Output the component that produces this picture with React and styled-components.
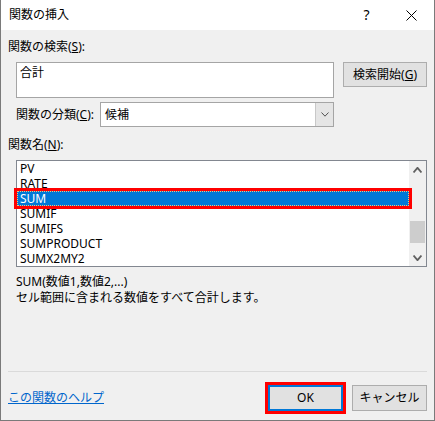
import React from "react";
import styled, { createGlobalStyle } from "styled-components";

// --- ESTILOS ---
const GlobalStyle = createGlobalStyle`
  html, body {
    margin: 0;
    padding: 0;
    background: #f0f0f0;
  }
`;

const Window = styled.div`
  width: 435px;
  height: 421px;
  box-sizing: border-box;
  border: 1px solid #7a7a7a;
  border-top: none;
  background: #f0f0f0;
  display: flex;
  flex-direction: column;
  font-family: "Noto Sans", "Noto Sans CJK JP", sans-serif;
  font-size: 12px;
  line-height: 16px;
  color: #000;
`;

const TitleBar = styled.div`
  height: 30px;
  background: #fff;
  display: flex;
  align-items: center;
  padding-left: 8px;
`;

const Title = styled.div`
  flex: 1;
`;

const TitleButton = styled.div`
  width: 45px;
  height: 30px;
  display: flex;
  align-items: center;
  justify-content: center;
  font-size: 14px;
`;

const Body = styled.div`
  flex: 1;
  display: flex;
  flex-direction: column;
  padding: 9px 7px 9px;
`;

const Label = styled.div`
  margin-top: ${(p) => p.$mt || 0}px;
  height: 16px;
`;

const Row = styled.div`
  display: flex;
  align-items: ${(p) => p.$align || "center"};
  margin-top: ${(p) => p.$mt || 0}px;
  margin-left: 8px;
`;

const SearchBox = styled.div`
  width: 318px;
  height: 36px;
  box-sizing: border-box;
  border: 1px solid #a5a5a5;
  background: #fff;
  padding: 2px 3px;
`;

const Button = styled.div`
  width: ${(p) => p.$w || 75}px;
  height: ${(p) => p.$h || 26}px;
  box-sizing: border-box;
  border: ${(p) => (p.$default ? "2px solid #0078d7" : "1px solid #adadad")};
  background: #e1e1e1;
  display: flex;
  align-items: center;
  justify-content: center;
  margin-left: ${(p) => p.$ml || 0}px;
  ${(p) => p.$marked && "outline: 3px solid #ff0000;"}
`;

const CategoryLabel = styled.div`
  width: 84px;
`;

const Select = styled.div`
  width: 234px;
  height: 25px;
  box-sizing: border-box;
  border: 1px solid #a5a5a5;
  background: #fff;
  display: flex;
`;

const SelectValue = styled.div`
  flex: 1;
  padding-left: 4px;
  display: flex;
  align-items: center;
`;

const DropButton = styled.div`
  width: 17px;
  background: #e5e5e5;
  border-left: 1px solid #c8c8c8;
  display: flex;
  align-items: center;
  justify-content: center;
`;

const ListBox = styled.div`
  margin-top: 7px;
  margin-left: 8px;
  width: 411px;
  height: 107px;
  box-sizing: border-box;
  border: 1px solid #828790;
  background: #fff;
  display: flex;
`;

const Items = styled.div`
  flex: 1;
  display: flex;
  flex-direction: column;
`;

const Item = styled.div`
  position: relative;
  height: 15px;
  line-height: 15px;
  padding-left: 3px;
  ${(p) =>
    p.$selected &&
    `
    background: #0078d7;
    color: #fff;
    outline: 3px solid #ff0000;
    z-index: 1;
    &::after {
      content: "";
      position: absolute;
      inset: 0;
      border: 1px dotted #f5c27a;
    }
  `}
`;

const ScrollBar = styled.div`
  width: 17px;
  background: #f0f0f0;
  display: flex;
  flex-direction: column;
  align-items: center;
`;

const ScrollArrow = styled.div`
  height: 17px;
  width: 17px;
  display: flex;
  align-items: center;
  justify-content: center;
`;

const ScrollTrack = styled.div`
  flex: 1;
  width: 100%;
  padding-top: 43px;
  box-sizing: border-box;
`;

const Thumb = styled.div`
  width: 15px;
  height: 22px;
  margin-left: 1px;
  background: #cdcdcd;
`;

const Description = styled.div`
  margin-top: 7px;
  margin-left: 8px;
`;

const Footer = styled.div`
  margin-top: auto;
`;

const Separator = styled.div`
  height: 1px;
  background: #dadada;
`;

const FooterRow = styled.div`
  margin-top: 13px;
  height: 26px;
  display: flex;
  align-items: center;
  justify-content: space-between;
`;

const HelpLink = styled.a`
  color: #0066cc;
  text-decoration: underline;
  cursor: pointer;
`;

const Buttons = styled.div`
  display: flex;
`;

// --- ÍCONES ---
const Chevron = ({ up, w = 8, h = 5, sw = 1.6, color = "#606060" }) => (
  <svg width={w} height={h} viewBox={`0 0 ${w} ${h}`}>
    <polyline
      points={up ? `0.5,${h - 0.5} ${w / 2},0.8 ${w - 0.5},${h - 0.5}` : `0.5,0.5 ${w / 2},${h - 0.8} ${w - 0.5},0.5`}
      fill="none"
      stroke={color}
      strokeWidth={sw}
    />
  </svg>
);

const CloseIcon = () => (
  <svg width="11" height="11" viewBox="0 0 11 11">
    <path d="M0.5 0.5 L10.5 10.5 M10.5 0.5 L0.5 10.5" stroke="#000" strokeWidth="1" fill="none" />
  </svg>
);

const funcoes = ["PV", "RATE", "SUM", "SUMIF", "SUMIFS", "SUMPRODUCT", "SUMX2MY2"];

// --- COMPONENTE ---
const App = () => {
  return (
    <>
      <GlobalStyle />
      <Window>
        <TitleBar>
          <Title>関数の挿入</Title>
          <TitleButton>?</TitleButton>
          <TitleButton>
            <CloseIcon />
          </TitleButton>
        </TitleBar>

        <Body>
          <Label>
            関数の検索(<u>S</u>):
          </Label>
          <Row $mt={7} $align="flex-start">
            <SearchBox>合計</SearchBox>
            <Button $w={84} $h={25} $ml={9}>
              検索開始(<u>G</u>)
            </Button>
          </Row>

          <Row $mt={4}>
            <CategoryLabel>
              関数の分類(<u>C</u>):
            </CategoryLabel>
            <Select>
              <SelectValue>候補</SelectValue>
              <DropButton>
                <Chevron w={8} h={5} sw={1} color="#505050" />
              </DropButton>
            </Select>
          </Row>

          <Label $mt={10}>
            関数名(<u>N</u>):
          </Label>
          <ListBox>
            <Items>
              {funcoes.map((f) => (
                <Item key={f} $selected={f === "SUM"}>
                  {f}
                </Item>
              ))}
            </Items>
            <ScrollBar>
              <ScrollArrow>
                <Chevron up w={9} h={6} sw={1.8} />
              </ScrollArrow>
              <ScrollTrack>
                <Thumb />
              </ScrollTrack>
              <ScrollArrow>
                <Chevron w={9} h={6} sw={1.8} />
              </ScrollArrow>
            </ScrollBar>
          </ListBox>

          <Description>
            <div>SUM(数値1,数値2,...)</div>
            <div>セル範囲に含まれる数値をすべて合計します。</div>
          </Description>

          <Footer>
            <Separator />
            <FooterRow>
              <HelpLink>この関数のヘルプ</HelpLink>
              <Buttons>
                <Button $default $marked>
                  OK
                </Button>
                <Button $ml={9}>キャンセル</Button>
              </Buttons>
            </FooterRow>
          </Footer>
        </Body>
      </Window>
    </>
  );
};

export default App;
